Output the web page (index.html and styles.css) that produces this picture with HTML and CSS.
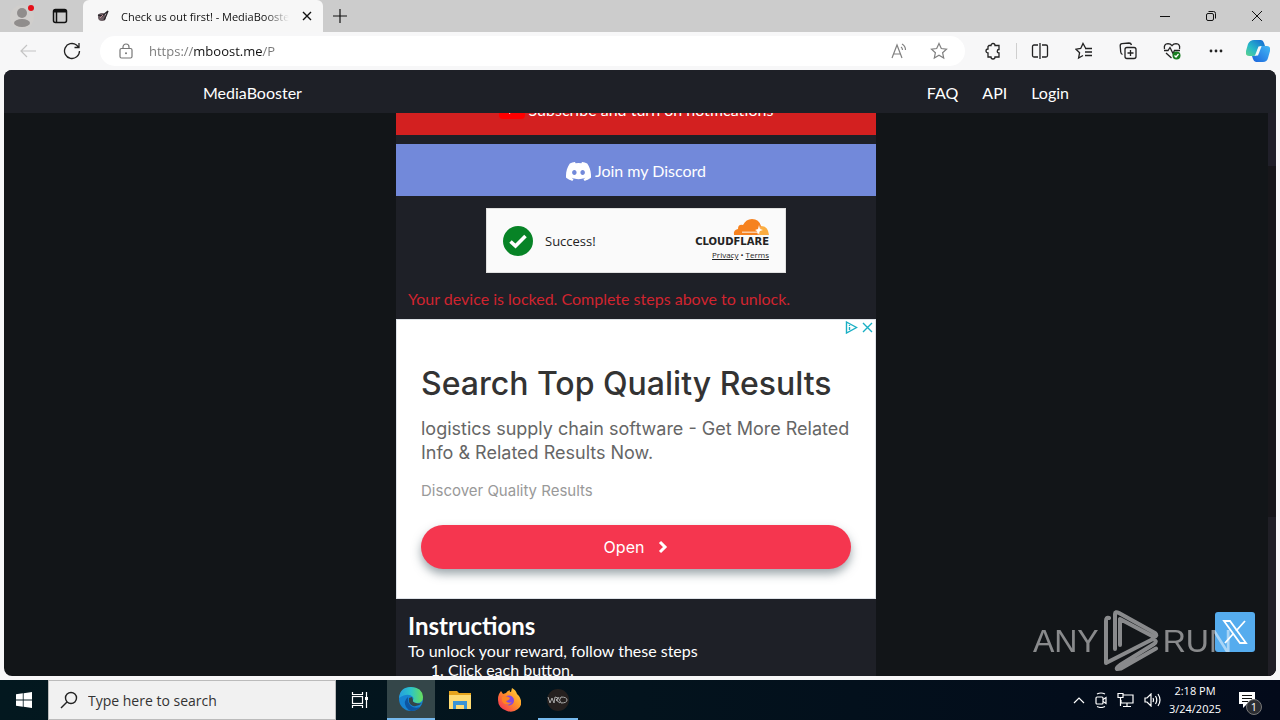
FILE: index.html
```html
<!DOCTYPE html>
<html lang="en">

<head>
    <meta charset="UTF-8">
    <meta name="viewport" content="width=device-width, initial-scale=1.0">
    <title>Check us out first! - MediaBooster</title>
    <link rel="stylesheet" href="styles.css">
</head>

<body>
    <!-- browser tabs -->
    <header class="tabs">
        <button class="profile" aria-label="Profile">
            <svg width="28" height="28" viewBox="0 0 28 28"><circle cx="14" cy="15" r="12" fill="#d0cecc"/><circle cx="14" cy="11" r="5" fill="#908d8c"/><ellipse cx="14" cy="21" rx="8" ry="4" fill="#908d8c"/><circle cx="23" cy="6" r="3" fill="#e50f19"/></svg>
        </button>
        <button class="tab-actions" aria-label="Tab actions">
            <svg width="16" height="16" viewBox="0 0 16 16" fill="none" stroke="#111" stroke-width="1.5"><rect x="1.5" y="1.5" width="13" height="13" rx="2"/><path d="M2 3h12" stroke-width="3"/><path d="M4.500 4v10"/></svg>
        </button>
        <div class="tab">
            <svg width="12" height="12" viewBox="0 0 12 12"><circle cx="5" cy="7" r="4" fill="#6b5d63"/><path d="M1 5l4 1 6-5-2 5-2 4" fill="none" stroke="#292529" stroke-width="1.300"/><path d="M3 8l3-3" stroke="#c08a92"/></svg>
            <span class="tab-title">Check us out first! - MediaBooster</span>
            <button class="tab-close" aria-label="Close tab">
                <svg width="10" height="10" viewBox="0 0 10 10" stroke="#111" stroke-width="1.4"><path d="M1 1l8 8M9 1l-8 8"/></svg>
            </button>
        </div>
        <button class="new-tab" aria-label="New tab">
            <svg width="14" height="14" viewBox="0 0 14 14" stroke="#111" stroke-width="1.2"><path d="M0 7h14M7 0v14"/></svg>
        </button>
        <div class="window-buttons">
            <button aria-label="Minimize"><svg width="12" height="12" viewBox="0 0 12 12"><path d="M1 6.500h10" stroke="#111"/></svg></button>
            <button aria-label="Restore"><svg width="12" height="12" viewBox="0 0 12 12" fill="none" stroke="#111"><rect x="1.500" y="3.500" width="7" height="7" rx="1.500"/><path d="M3.500 1.500h5q2 0 2 2v5"/></svg></button>
            <button aria-label="Close"><svg width="12" height="12" viewBox="0 0 12 12" stroke="#111"><path d="M1 1l10 10M11 1L1 11"/></svg></button>
        </div>
    </header>

    <!-- address bar -->
    <div class="toolbar">
        <button aria-label="Back"><svg width="18" height="18" viewBox="0 0 18 18" fill="none" stroke="#c4c4c4" stroke-width="1.2"><path d="M17 9H2M8 3L2 9l6 6"/></svg></button>
        <button aria-label="Refresh"><svg width="18" height="18" viewBox="0 0 18 18" fill="none" stroke="#222" stroke-width="1.300"><path d="M16.500 9a7.500 7.500 0 1 1-3-6l2.500 2.500M16 1v4.500h-4.500"/></svg></button>
        <div class="address">
            <svg width="14" height="16" viewBox="0 0 14 16" fill="none" stroke="#777" stroke-width="1.200"><rect x="1" y="5.500" width="12" height="9.500" rx="1.500"/><path d="M4 5.500V4a3 3 0 0 1 6 0v1.500"/><circle cx="7" cy="10.200" r="1" fill="#777" stroke="none"/></svg>
            <input class="url" type="text" aria-label="Address" value="https://mboost.me/P">
            <button aria-label="Read aloud"><svg width="18" height="18" viewBox="0 0 18 18" fill="none" stroke="#808080" stroke-width="1.200"><path d="M2 16L7 3l5 13M3.700 12h6.600M11 5q1.500 1 1.500 3M12 2q3.500 2 3.500 6"/></svg></button>
            <button aria-label="Add to favorites"><svg width="18" height="18" viewBox="0 0 18 18" fill="none" stroke="#808080" stroke-width="1.200"><path d="M9 1.500l2.300 5 5.200.6-3.900 3.600 1.100 5.300L9 13.300 4.300 16l1.100-5.300L1.500 7.100l5.200-.6z"/></svg></button>
        </div>
        <button aria-label="Extensions"><svg width="18" height="18" viewBox="0 0 18 18" fill="none" stroke="#222" stroke-width="1.300"><path d="M5 3.500h2a2 2 0 0 1 4 0h4v4a1.700 1.700 0 1 0 0 3.500v4h-4a2 2 0 0 1-4 0H4v-4a2 2 0 1 1 0-4v-2.500z"/></svg></button>
        <span class="divider"></span>
        <button aria-label="Split screen"><svg width="18" height="18" viewBox="0 0 18 18" fill="none" stroke="#222" stroke-width="1.300"><path d="M7 3H3a1.500 1.500 0 0 0-1.500 1.500v9A1.500 1.500 0 0 0 3 15h4M11 3h4a1.500 1.500 0 0 1 1.500 1.500v9A1.500 1.500 0 0 1 15 15h-4M9 1v16"/></svg></button>
        <button aria-label="Favorites"><svg width="18" height="18" viewBox="0 0 18 18" fill="none" stroke="#222" stroke-width="1.300"><path d="M10.500 6L8 1.500 5.700 6.500l-4.700.7 3.600 3.500-1 5.300L8 13.500M10 6.500h7M10 10h7M10 13.500h7"/></svg></button>
        <button aria-label="Collections"><svg width="18" height="18" viewBox="0 0 18 18" fill="none" stroke="#222" stroke-width="1.300"><rect x="6" y="5.500" width="11" height="11" rx="2"/><path d="M11.500 8v6M8.500 11h6M3.500 12.500Q2 12 1.700 10L1.200 4Q1 2 3 1.700L10 1q2 0 2.500 2"/></svg></button>
        <button aria-label="Browser essentials"><svg width="18" height="18" viewBox="0 0 18 18" fill="none" stroke="#222" stroke-width="1.300"><path d="M1.500 7Q.5 2 5 1.700q2.500 0 4 2 1.500-2 4-2 4.500.3 3.500 5.300M1 8.500h4l2-3 3 6 1.500-3H17M3 11l5.500 5"/><circle cx="13.500" cy="13.500" r="4" fill="#187d20" stroke="none"/><path d="M11.500 13.500l1.500 1.500 2.500-3" stroke="#fff"/></svg></button>
        <button aria-label="Settings and more"><svg width="18" height="18" viewBox="0 0 18 18" fill="#222"><circle cx="4" cy="9" r="1.400"/><circle cx="9" cy="9" r="1.400"/><circle cx="14" cy="9" r="1.400"/></svg></button>
        <button class="copilot" aria-label="Copilot">
            <svg width="24" height="24" viewBox="0 0 24 24">
                <defs>
                    <linearGradient id="cpLeft" x1="0" y1="1" x2="1" y2="0"><stop offset="0" stop-color="#5fd38a"/><stop offset=".4" stop-color="#28b9c8"/><stop offset="1" stop-color="#1563d5"/></linearGradient>
                    <linearGradient id="cpRight" x1="0" y1="1" x2="1" y2="0"><stop offset="0" stop-color="#1b63dc"/><stop offset="1" stop-color="#43b9f5"/></linearGradient>
                </defs>
                <path d="M8 1h7q2 0 3 3l1 3h-4q-2 0-3 3l-2 6q-1 1-3 1H3q-4 0-3-5l2-7q2-4 6-4z" fill="url(#cpLeft)"/>
                <path d="M16 7h5q4 0 3 5l-2 7q-1 4-5 4h-7q-2 0-3-3l-1-3h3q2 0 3-3l2-5q1-2 2-2z" fill="url(#cpRight)"/>
                <path d="M12.500 7.500h3l-3.500 9H9z" fill="#f7f7f8"/>
            </svg>
        </button>
    </div>

    <!-- web page -->
    <div class="page">
        <nav class="site-nav">
            <div class="nav-inner">
                <a class="brand" href="#">MediaBooster</a>
                <a href="#">FAQ</a>
                <a href="#">API</a>
                <a href="#">Login</a>
            </div>
        </nav>
        <div class="scroll-area">
            <main class="column">
                <button class="step youtube">
                    <svg width="26" height="18" viewBox="0 0 26 18"><rect width="26" height="18" rx="4" fill="#f00"/><path d="M10 5l7 4-7 4z" fill="#fff"/></svg>
                    Subscribe and turn on notifications
                </button>
                <button class="step discord">
                    <svg width="25" height="25" viewBox="0 0 24 24" fill="#fff"><path d="M20.317 4.370a19.800 19.800 0 0 0-4.885-1.515.074.074 0 0 0-.079.037c-.211.375-.445.865-.608 1.250a18 18 0 0 0-5.487 0c-.164-.393-.406-.874-.618-1.250a.077.077 0 0 0-.079-.037A19.700 19.700 0 0 0 3.677 4.370C.533 9.046-.319 13.580.099 18.058c2.053 1.508 4.041 2.423 5.993 3.030.55-.63.950-1.300 1.310-2.020-.653-.248-1.950-.6-1.950-1.120 4.300 1.900 8.800 1.900 13.100 0 0 .52-1.300.87-1.950 1.120.36.700.77 1.360 1.310 2.020 1.961-.607 3.950-1.522 6.002-3.030.5-5.177-.838-9.674-3.550-13.688zM8.020 15.331c-1.183 0-2.157-1.086-2.157-2.419s.956-2.419 2.157-2.419c1.211 0 2.176 1.095 2.157 2.419 0 1.333-.956 2.419-2.157 2.419zm7.975 0c-1.183 0-2.157-1.086-2.157-2.419s.955-2.419 2.157-2.419c1.211 0 2.176 1.095 2.157 2.419 0 1.333-.946 2.419-2.157 2.419z"/></svg>
                    Join my Discord
                </button>

                <div class="captcha">
                    <svg width="30" height="30" viewBox="0 0 30 30"><circle cx="15" cy="15" r="15" fill="#078326"/><path d="M7.500 15.500l5 4.500 10-10" fill="none" stroke="#fff" stroke-width="3.600"/></svg>
                    <span class="captcha-text">Success!</span>
                    <div class="cloudflare">
                        <svg width="36" height="17" viewBox="0 0 36 17"><path d="M1 16Q0 11 5 10q0-5 5-4Q13 0 19 0q7 0 9 7l-2 9z" fill="#f6821f"/><path d="M26 16l2-9q7 0 8 9z" fill="#fbad41"/><path d="M9 12.500h14q2 0 3-2.500l-1 4H9z" fill="#fff" opacity=".6"/><path d="M26 6l1 4 3 1-3 1-2 4-1-4-2-1 3-1z" fill="#fff"/></svg>
                        <span class="cf-name">CLOUDFLARE</span>
                        <span class="cf-links"><a href="#">Privacy</a> • <a href="#">Terms</a></span>
                    </div>
                </div>

                <p class="locked">Your device is locked. Complete steps above to unlock.</p>

                <section class="ad">
                    <div class="ad-choices">
                        <svg width="13" height="13" viewBox="0 0 13 13" fill="none" stroke="#19afc4" stroke-width="1.400"><path d="M1.500 1l10 5.500-10 5.500z"/><path d="M4.500 6v3M4.500 4v1"/></svg>
                        <svg width="11" height="11" viewBox="0 0 11 11" stroke="#19afc4" stroke-width="1.400"><path d="M1 1l9 9M10 1l-9 9"/></svg>
                    </div>
                    <h2>Search Top Quality Results</h2>
                    <p class="ad-text">logistics supply chain software - Get More Related Info &amp; Related Results Now.</p>
                    <p class="ad-note">Discover Quality Results</p>
                    <button class="ad-open">
                        Open
                        <svg width="10" height="14" viewBox="0 0 10 14" fill="none" stroke="#fff" stroke-width="3"><path d="M2 2l5 5-5 5"/></svg>
                    </button>
                </section>

                <section class="instructions">
                    <h1>Instructions</h1>
                    <p>To unlock your reward, follow these steps</p>
                    <ol>
                        <li>Click each button.</li>
                    </ol>
                </section>
            </main>
            <div class="scrollbar"><span class="thumb-top"></span><span class="thumb-bottom"></span></div>
        </div>
        <a class="x-link" href="#" aria-label="X">
            <svg width="26" height="26" viewBox="0 0 26 26" fill="none" stroke="#fff" stroke-width="1.800"><path d="M2 2h6l16 22h-6zM23 2L14 12M11 15l-8 9"/></svg>
        </a>
        <div class="watermark">
            <span>ANY</span>
            <svg width="56" height="62" viewBox="0 0 56 62" fill="none" stroke="#fff" stroke-width="4" stroke-linejoin="round" stroke-linecap="round"><path d="M6 8q-3-1-3 3v42l47-24q5 2 1 5L17 55q-4 3-3 4l4-.500 35-20M12 39V4q0-3 4-1l36 20q3 3-1 4L17 9v26"/></svg>
            <span>RUN</span>
        </div>
    </div>

    <!-- windows taskbar -->
    <footer class="taskbar">
        <button class="task" aria-label="Start"><svg width="16" height="16" viewBox="0 0 16 16" fill="#fff"><path d="M0 2.200L6.800 1.300v6.200H0zM7.600 1.200L16 0v7.500H7.600zM0 8.400h6.800v6.300L0 13.800zM7.600 8.400H16V16l-8.400-1.200z"/></svg></button>
        <label class="search">
            <svg width="18" height="18" viewBox="0 0 18 18" fill="none" stroke="#222" stroke-width="1.400"><circle cx="11" cy="7" r="5.500"/><path d="M7 11l-6 6"/></svg>
            <input type="text" aria-label="Search" placeholder="Type here to search">
        </label>
        <button class="task task-view" aria-label="Task view"><svg width="18" height="16" viewBox="0 0 18 16" fill="none" stroke="#fff" stroke-width="1.200"><rect x="1.500" y="4.500" width="10" height="7"/><path d="M1.500 0v2.500h10V0M1.500 16v-2.500h10V16M15.500 0v16"/><path d="M14 5h3v3h-3z" fill="#fff" stroke="none"/></svg></button>
        <button class="task active" aria-label="Microsoft Edge">
            <svg width="24" height="24" viewBox="0 0 24 24">
                <defs>
                    <linearGradient id="edgeTop" x1="0" y1="0" x2="1" y2="0"><stop offset="0" stop-color="#249ee0"/><stop offset=".5" stop-color="#2dc5c7"/><stop offset="1" stop-color="#69df58"/></linearGradient>
                </defs>
                <circle cx="12" cy="12" r="12" fill="#1683d2"/>
                <path d="M0 11Q1 0 12 0q11 0 12 10 0 6-6 6-5 0-4-3 1-1 0-3-5-5-14 1z" fill="url(#edgeTop)"/>
                <path d="M9 10q-5 4-2 10 2 3 5 4 6 0 9-4-5 2-9-1-4-4-3-9z" fill="#0d55a2"/>
                <path d="M10 11q-1 6 4 8 5 1 9-3-3 1-6 0-4-1-3-3l-1-3z" fill="#344649"/>
            </svg>
        </button>
        <button class="task" aria-label="File Explorer"><svg width="22" height="20" viewBox="0 0 22 20"><path d="M0 1h8l2 2h12v16H0z" fill="#e7a51c"/><path d="M0 5h22v14H0z" fill="#ffdc73"/><path d="M4 19v-8h14v8h-3v-4H7v4z" fill="#3a94d4"/></svg></button>
        <button class="task" aria-label="Firefox">
            <svg width="24" height="24" viewBox="0 0 24 24">
                <defs>
                    <linearGradient id="fox" x1="1" y1="0" x2="0" y2="1"><stop offset="0" stop-color="#ffe23d"/><stop offset=".45" stop-color="#ff9128"/><stop offset="1" stop-color="#f4225e"/></linearGradient>
                </defs>
                <path d="M2 6l2-3 2 3 3-1q1-2 4-3-1 2 1 2l1-4q4 2 5 6l2 2q5 8-1 13-5 4-11 2-9-3-9-11 0-4 1-6z" fill="url(#fox)"/>
                <circle cx="12" cy="12.500" r="5" fill="#8248e0"/>
                <path d="M5 9q5-2 8 1 0 2-4 3 2 3 6 1-3 4-7 2-4-2-3-7z" fill="#ff8324"/>
            </svg>
        </button>
        <button class="task running" aria-label="Application"><svg width="24" height="24" viewBox="0 0 24 24" fill="none"><circle cx="12" cy="12" r="11" fill="#25201f"/><path d="M2 9l2 6 2-5 2 5 1-6 3 1-2 2 4 3M13 9l-2 4M15 9q-3 3 0 6 6 0 6-3t-6-3" stroke="#aaa"/></svg></button>
        <div class="tray">
            <svg width="12" height="8" viewBox="0 0 12 8" fill="none" stroke="#fff" stroke-width="1.200"><path d="M1 7l5-5 5 5"/></svg>
            <svg width="14" height="16" viewBox="0 0 14 16" fill="none" stroke="#fff" stroke-width="1.200"><rect x="2" y="5" width="7" height="7" rx="1"/><path d="M9 7.500l3-2v6l-3-2M3 2q4-2 8 0M3 14.500q4 2 8 0"/></svg>
            <svg width="18" height="16" viewBox="0 0 18 16" fill="none" stroke="#fff" stroke-width="1.200"><path d="M6 3h10v8H4V8M1 1.500h5v4H1zM3.500 5.500V14M10 11v3M6 14.500h8"/></svg>
            <svg width="17" height="14" viewBox="0 0 17 14" fill="none" stroke="#fff" stroke-width="1.200"><path d="M1 5h2l4-4v12L3 9H1zM9 5q1 2 0 4M11.500 3q2.500 4 0 8M14 1q4 6 0 12"/></svg>
        </div>
        <div class="clock">
            <span>2:18 PM</span>
            <span>3/24/2025</span>
        </div>
        <button class="notify" aria-label="Notifications">
            <svg width="16" height="16" viewBox="0 0 16 16"><path d="M0 0h16v12h-8l-4 4v-4H0z" fill="#fff"/><path d="M3 3.500h10M3 6.500h10M3 9.500h6" stroke="#111"/></svg>
            <span class="count">1</span>
        </button>
    </footer>
</body>

</html>
```
FILE: styles.css
```css
* {
    box-sizing: border-box;
}

body {
    margin: 0;
    height: 100vh;
    display: flex;
    flex-direction: column;
    overflow: hidden;
    background-color: #f7f7f8;
    font-family: "Open Sans", "Noto Sans", sans-serif;
    font-size: 13px;
    color: #111;
}

h1, h2, p, ol {
    margin: 0;
    font-weight: normal;
}

button {
    display: flex;
    align-items: center;
    justify-content: center;
    padding: 0;
    border: 0;
    background: none;
    font: inherit;
    color: inherit;
}

input {
    border: 0;
    padding: 0;
    background: none;
    font: inherit;
    min-width: 0;
}

a {
    color: inherit;
    text-decoration: none;
}

svg {
    flex: none;
}

/* tabs */
.tabs {
    display: flex;
    height: 32px;
    flex: none;
    background-color: #cccccc;
}

.profile {
    width: 44px;
}

.tab-actions {
    width: 32px;
    margin-right: 7px;
}

.tab {
    display: flex;
    align-items: center;
    gap: 12px;
    width: 240px;
    padding: 0 10px 0 14px;
    background-color: #f7f7f7;
    border-radius: 6px 6px 0 0;
}

.tab-title {
    flex: 1;
    overflow: hidden;
    white-space: nowrap;
    font-size: 11px;
    mask-image: linear-gradient(to left, transparent, #000 24px);
}

.tab-close {
    width: 12px;
    height: 16px;
}

.new-tab {
    width: 34px;
}

.window-buttons {
    display: flex;
    margin-left: auto;
}

.window-buttons button {
    width: 46px;
}

/* toolbar */
.toolbar {
    display: flex;
    align-items: center;
    height: 38px;
    flex: none;
    padding: 0 2px 0 6px;
}

.toolbar button {
    width: 44px;
    height: 30px;
}

.address {
    display: flex;
    align-items: center;
    flex: 1;
    height: 30px;
    margin: 0 6px;
    padding: 0 6px 0 19px;
    background-color: #fff;
    border-radius: 15px;
}

.address button {
    width: 40px;
}

.url {
    flex: 1;
    margin-left: 16px;
    font-size: 13px;
    color: transparent;
    background-image: linear-gradient(to right, #777 45px, #111 45px, #111 114px, #777 114px);
    background-clip: text;
}

.divider {
    width: 1px;
    height: 16px;
    margin: 0 1px;
    background-color: #cfcfcf;
}

.toolbar .copilot {
    width: 40px;
}

/* page */
.page {
    position: relative;
    display: flex;
    flex-direction: column;
    flex: 1;
    min-height: 0;
    margin: 0 4px 4px;
    overflow: hidden;
    border-radius: 8px;
    background-color: #121518;
    color: #fff;
    font-family: Lato, sans-serif;
    font-size: 16px;
    line-height: 20px;
}

.site-nav {
    flex: none;
    padding-right: 8px;
    background-color: #1e2027;
}

.nav-inner {
    display: flex;
    align-items: center;
    gap: 24px;
    height: 43px;
    max-width: 890px;
    margin: 0 auto;
    padding: 2px 12px 0;
}

.brand {
    margin-right: auto;
}

.scroll-area {
    display: flex;
    flex: 1;
    min-height: 0;
    overflow: hidden;
}

.column {
    width: 480px;
    max-width: 100%;
    height: max-content;
    margin: -30px auto 0;
    background-color: #1e2027;
}

.scrollbar {
    display: flex;
    flex-direction: column;
    justify-content: space-between;
    width: 8px;
    background-color: #17161a;
}

.thumb-top {
    height: 53px;
    background-color: #201f29;
}

.thumb-bottom {
    height: 159px;
    background-color: #201f26;
}

.step {
    width: 100%;
    height: 52px;
    gap: 4px;
    padding-top: 2px;
    margin-bottom: 9px;
}

.youtube {
    background-color: #d32020;
}

.discord {
    background-color: #7289da;
}

.captcha {
    display: flex;
    align-items: center;
    gap: 12px;
    width: 300px;
    height: 65px;
    margin: 12px auto;
    padding: 0 16px;
    border: 1px solid #e0e0e0;
    background-color: #fafafa;
    color: #232323;
}

.captcha-text {
    font-family: "Open Sans", sans-serif;
    font-size: 13px;
}

.cloudflare {
    display: flex;
    flex-direction: column;
    align-items: flex-end;
    margin-left: auto;
}

.cf-name {
    font-family: "DejaVu Sans", sans-serif;
    font-size: 10px;
    font-weight: bold;
    line-height: 12px;
}

.cf-links {
    font-family: "Open Sans", sans-serif;
    font-size: 8px;
    line-height: 14px;
}

.cf-links a {
    text-decoration: underline;
}

.locked {
    padding: 4px 12px 10px;
    color: #d0242f;
}

/* ad */
.ad {
    height: 280px;
    padding: 1px 24px 0;
    border: 1px solid #dfe3e8;
    background-color: #fff;
    font-family: Inter, sans-serif;
}

.ad-choices {
    display: flex;
    align-items: center;
    gap: 4px;
    height: 13px;
    justify-content: flex-end;
    margin-right: -22px;
}

.ad h2 {
    margin-top: 30px;
    font-size: 32px;
    font-weight: 500;
    line-height: 40px;
    white-space: nowrap;
    color: #333;
}

.ad-text {
    margin-top: 13px;
    font-size: 18px;
    line-height: 24px;
    color: #666;
}

.ad-note {
    margin-top: 16px;
    font-size: 15px;
    line-height: 20px;
    color: #999;
}

.ad-open {
    width: 100%;
    height: 44px;
    gap: 14px;
    margin-top: 24px;
    border-radius: 22px;
    background-color: #f5364f;
    box-shadow: 0 5px 10px rgba(60, 80, 90, 0.5);
    color: #fff;
    font-size: 16px;
}

.instructions {
    padding: 12px 12px;
}

.instructions h1 {
    font-size: 24px;
    font-weight: bold;
    line-height: 30px;
}

.instructions p, .instructions li {
    line-height: 19px;
}

.instructions ol {
    padding-left: 40px;
}

.x-link {
    position: absolute;
    right: 21px;
    bottom: 24px;
    display: flex;
    align-items: center;
    justify-content: center;
    width: 40px;
    height: 40px;
    border-radius: 3px;
    background-color: #55acee;
}

.watermark {
    position: absolute;
    right: 44px;
    bottom: 4px;
    display: flex;
    align-items: center;
    gap: 4px;
    opacity: 0.5;
    font-family: "Liberation Sans", sans-serif;
    font-size: 32px;
}

/* taskbar */
.taskbar {
    display: flex;
    height: 40px;
    flex: none;
    background: linear-gradient(to right, #03181f, #03131d 50%, #030a1a);
    color: #fff;
}

.task {
    width: 48px;
    margin-right: 1px;
}

.task:first-child {
    margin-right: 0;
}

.task-view {
    margin-right: 3px;
}

.active {
    background-color: #344649;
    border-bottom: 2px solid #76b9ed;
}

.running {
    background: linear-gradient(#76b9ed, #76b9ed) bottom / 40px 2px no-repeat;
}

.search {
    display: flex;
    align-items: center;
    gap: 10px;
    width: 288px;
    padding: 0 11px;
    border: 1px solid #bbb;
    background-color: #f1f1f1;
}

.search input {
    flex: 1;
    font-size: 14px;
}

.search input::placeholder {
    color: #333;
}

.tray {
    display: flex;
    align-items: center;
    gap: 9px;
    margin-left: auto;
}

.clock {
    display: flex;
    flex-direction: column;
    align-items: center;
    justify-content: center;
    width: 68px;
    font-size: 11px;
    line-height: 18px;
}

.notify {
    position: relative;
    width: 36px;
    margin-right: 15px;
}

.count {
    position: absolute;
    left: 17px;
    top: 19px;
    width: 16px;
    height: 16px;
    border: 1px solid #777;
    border-radius: 8px;
    background-color: #2b2d32;
    font-size: 11px;
    line-height: 14px;
}
```
